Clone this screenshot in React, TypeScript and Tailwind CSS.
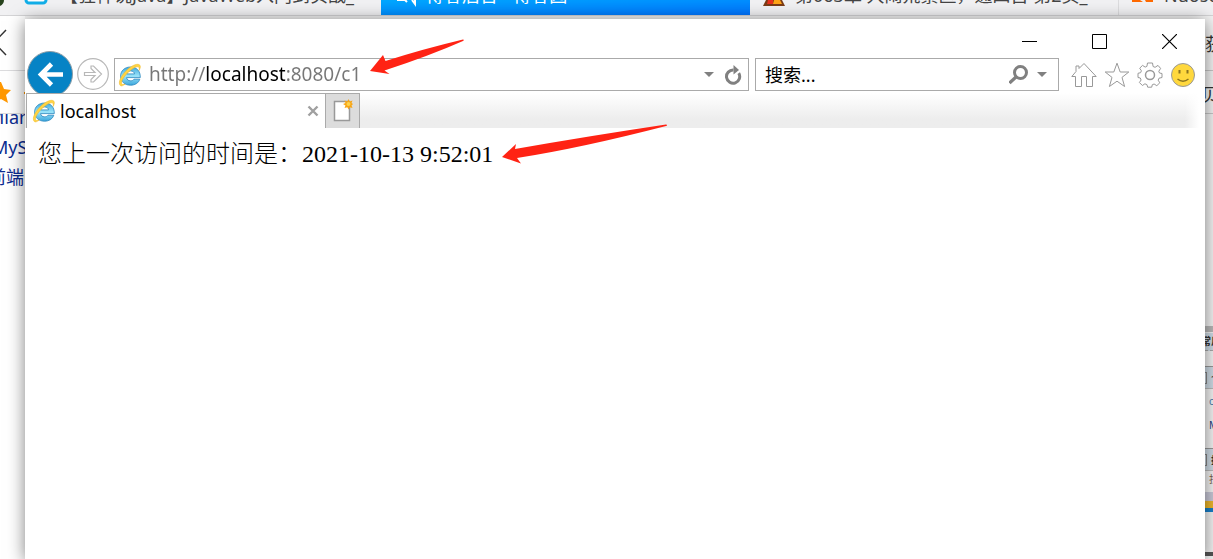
import type { ReactNode } from 'react';

const UI_FONT = "font-['Noto_Sans','Noto_Sans_CJK_SC',sans-serif]";

function IeLogo() {
  return (
    <svg viewBox="0 0 24 24" className="size-6 shrink-0" aria-hidden="true">
      <defs>
        <linearGradient id="ie-blue" x1="0" y1="0" x2="0" y2="1">
          <stop offset="0" stopColor="#3fa9dc" />
          <stop offset="0.5" stopColor="#9be4fa" />
          <stop offset="1" stopColor="#3ba6dc" />
        </linearGradient>
      </defs>
      <path
        d="M22.300 14.600H8.600c.2 2 1.700 3.200 3.900 3.200 1.600 0 2.800-.5 3.500-1.600h5.800c-1.200 3.800-4.700 6-9.300 6C6.700 22.200 2.600 18.600 2.600 13.100S6.800 4 12.600 4s9.900 3.800 9.700 10.600zM16.500 10.900c-.2-1.800-1.700-3-3.800-3s-3.700 1.200-4 3z"
        fill="url(#ie-blue)"
        stroke="#2b86be"
        strokeWidth="0.8"
      />
      <path
        d="M2.400 22.600C-.6 20 3.200 12 9.700 6.300 15 1.600 20.400.1 21.900 2.200c.9 1.300.3 3.300-.8 5.300.3-1.800.3-2.900-.5-3.400C18.900 3 14.600 5.100 10.300 9.200 5 14.300 2.300 19.600 4 21.200c.6.6 1.700.5 3.200-.1-2 1.500-3.800 2.300-4.800 1.500z"
        fill="#ffd445"
        stroke="#efb51f"
        strokeWidth="0.5"
      />
    </svg>
  );
}

function Caret() {
  return (
    <svg viewBox="0 0 10 5" className="h-[5px] w-[10px] shrink-0" aria-hidden="true">
      <path d="M0 0h10L5 5z" fill="#808080" />
    </svg>
  );
}

function IconButton({ label, children }: { label: string; children: ReactNode }) {
  return (
    <button type="button" aria-label={label} className="block shrink-0">
      {children}
    </button>
  );
}

// 后面浏览器的标签栏，只露出底部
function BackTabs() {
  return (
    <div className="flex h-4 overflow-hidden border-b border-[#d4d4d6] bg-[#f1f1f3] text-[18px] leading-6 whitespace-nowrap text-[#444]">
      <div className="flex w-[381px] shrink-0">
        <svg viewBox="0 0 60 16" className="h-4 w-[60px] shrink-0" aria-hidden="true">
          <path d="M0 0h4Q4 4 0 6z" fill="#27421c" />
          <rect x="26" y="-12" width="20" height="15" rx="3" fill="#fff" stroke="#12aee8" strokeWidth="3" />
        </svg>
        <span className="-mt-[17px]">【狂神说Java】JavaWeb入门到实战_</span>
      </div>
      <div className="flex w-[369px] shrink-0 bg-linear-to-br from-[#00a8ff] to-[#0073ff] text-white">
        <svg viewBox="0 0 45 16" className="h-4 w-[45px] shrink-0" aria-hidden="true">
          <path d="M16 0h8l2 2M31 0l3 4V0" fill="none" stroke="#fff" strokeWidth="2" />
        </svg>
        <span className="-mt-[17px]">博客后台 - 博客园</span>
      </div>
      <div className="flex w-[369px] shrink-0 border-r border-[#dcdcde]">
        <svg viewBox="0 0 45 16" className="h-4 w-[45px] shrink-0" aria-hidden="true">
          <path d="M16 0h16l3 6H13z" fill="#7a3b16" />
          <path d="M18 0h5v4h-6z" fill="#e8301c" />
          <path d="M24 0h6l2 4h-9z" fill="#ffa416" />
        </svg>
        <span className="-mt-[17px]">第063章 大闹荒景区，通四古 第2页_</span>
      </div>
      <div className="flex">
        <svg viewBox="0 0 45 16" className="h-4 w-[45px] shrink-0" aria-hidden="true">
          <path d="M13 0h8l3 2H13zM26 0h8v2h-7z" fill="#ff6a00" />
        </svg>
        <span className="-mt-[17px]">Nuoso</span>
      </div>
    </div>
  );
}

function BackLeft() {
  return (
    <div className="w-[25px] overflow-hidden bg-white text-[18px] leading-[30px] whitespace-nowrap text-[#0b2c91]">
      <svg viewBox="0 0 25 98" className="h-[98px] w-[25px]" aria-hidden="true">
        <path d="M6 14L-6 26.500 6 39" fill="none" stroke="#333" strokeWidth="1.500" />
        <path d="M0 54.500h25M0 97.500h25" stroke="#dcdcde" />
        <path d="M1 66l3 7 7 1-5 5 2 8-7-4-7 4V66z" fill="#ff9800" />
        <path d="M24 76h1v2h-1z" fill="#ff9800" />
      </svg>
      <div className="h-[18px] overflow-hidden">
        <a href="#maven" className="-mt-3 -ml-3 block">Mlan</a>
      </div>
      <a href="#mysql" className="-ml-2 block">MyS</a>
      <a href="#front" className="-ml-3 block">前端</a>
    </div>
  );
}

function BackRight() {
  return (
    <div className="w-2 overflow-hidden bg-[#f4f4f4] text-[18px] leading-6 whitespace-nowrap text-[#333]">
      <div className="h-[55px] overflow-hidden border-b border-[#c8c8c8] pt-4">获</div>
      <div className="h-[43px] overflow-hidden border-b border-[#c8c8c8] pt-3">
        <span className="-ml-1">贝</span>
      </div>
      <div className="mt-[212px] mb-px h-[6px] bg-[#b9b9b9]" />
      <div className="text-[10px]">
        <div className="h-[18px] border-b border-dashed border-[#aaa] bg-[#cfdce6] leading-4 font-bold">
          <span className="-ml-1">常用</span>
        </div>
        <div className="mt-[15px] flex h-[23px] items-center gap-1 border-t border-b border-[#999] border-b-[#bbb] bg-[#cfdce6]">
          <i className="h-3 w-[2px] shrink-0 border-y border-r border-[#888]" />
          <span>个</span>
        </div>
        <div className="pl-1 text-[#4a7fae]">c</div>
        <div className="pl-1 text-[#223a7a]">M</div>
        <div className="mt-[11px] flex h-[23px] items-center gap-1 border-t border-b border-[#999] border-b-[#bbb] bg-[#cfdce6]">
          <i className="h-3 w-[2px] shrink-0 border-y border-r border-[#888]" />
          <span className="font-bold">技</span>
        </div>
        <div className="h-[21px] pl-1 leading-4 text-[#7b6048]">找</div>
      </div>
      <div className="h-[9px] bg-[#c9c9d8]" />
      <div className="h-[7px] bg-[#eeb72c]" />
      <div className="h-1 bg-[#1780cc]" />
      <div className="mt-10 h-1 bg-[#555]" />
    </div>
  );
}

function TitleBar() {
  return (
    <div className="flex h-8 items-end justify-end gap-[55px] pr-7 pb-[2px]">
      <IconButton label="最小化">
        <svg viewBox="0 0 15 15" className="size-[15px]"><path d="M0 7.500h15" stroke="#000" /></svg>
      </IconButton>
      <IconButton label="最大化">
        <svg viewBox="0 0 15 15" className="size-[15px]">
          <path d="M.5.5h14v14H.5z" fill="none" stroke="#000" />
        </svg>
      </IconButton>
      <IconButton label="关闭">
        <svg viewBox="0 0 15 15" className="size-[15px]">
          <path d="M0 0l15 15M15 0L0 15" stroke="#000" strokeWidth="1.200" />
        </svg>
      </IconButton>
    </div>
  );
}

function NavBar() {
  return (
    <div className="flex h-[42px] items-start overflow-hidden pr-[9px] pl-[2px]">
      <IconButton label="后退">
        <svg viewBox="0 0 46 46" className="size-[46px]">
          <circle cx="23" cy="23" r="22.500" fill="#0683c5" stroke="#8d9da6" />
          <path d="M36 23.500H14M24.500 13L14 23.500 24.500 34" fill="none" stroke="#fff" strokeWidth="4.600" />
        </svg>
      </IconButton>
      <div className="ml-1 flex h-[46px] items-center">
        <IconButton label="前进">
          <svg viewBox="0 0 32 32" className="size-8">
            <circle cx="16" cy="16" r="15.300" fill="#fff" stroke="#b8b8b8" strokeWidth="1.200" />
            <path
              d="M7.500 14.500H18l-4-4V8h2.500l8 8-8 8H14v-2.500l4-4H7.500z"
              fill="none"
              stroke="#b8b8b8"
              strokeWidth="1.200"
            />
          </svg>
        </IconButton>
      </div>
      <div className="mt-[7px] ml-[5px] flex h-[33px] min-w-0 flex-1 items-center border border-[#aaa] pr-[6px] pl-[3px]">
        <IeLogo />
        <input
          aria-label="地址"
          defaultValue="http://localhost:8080/c1"
          className="ml-[7px] h-7 min-w-0 flex-1 bg-[linear-gradient(to_right,#777_57px,#000_57px,#000_138px,#777_138px)] bg-clip-text text-[19px] text-transparent caret-black outline-none"
        />
        <Caret />
        <span className="ml-[10px]">
          <IconButton label="刷新">
            <svg viewBox="0 0 18 20" className="h-5 w-[18px]">
              <path d="M14.700 8.100A6.600 6.600 0 1 1 9.500 5" fill="none" stroke="#808080" strokeWidth="3" />
              <path d="M9.500 0l5.500 5-5.500 4.500z" fill="#808080" />
            </svg>
          </IconButton>
        </span>
      </div>
      <div className="mt-[7px] ml-[6px] flex h-[33px] w-[304px] shrink-0 items-center border border-[#aaa] pr-[11px] pl-[9px]">
        <input
          aria-label="搜索"
          placeholder="搜索..."
          className="h-7 min-w-0 flex-1 text-[18px] outline-none placeholder:text-black"
        />
        <IconButton label="执行搜索">
          <svg viewBox="0 0 20 20" className="size-5">
            <circle cx="11.500" cy="7.500" r="6" fill="none" stroke="#808080" strokeWidth="3" />
            <path d="M7 12L.5 18" stroke="#808080" strokeWidth="3.200" />
          </svg>
        </IconButton>
        <span className="ml-2">
          <Caret />
        </span>
      </div>
      <div className="mt-[11px] ml-3 flex shrink-0 gap-[7px]">
        <IconButton label="主页">
          <svg viewBox="0 0 26 26" className="size-[26px]" fill="none" stroke="#999">
            <path d="M13 1.500l-5 5V4H5v5.500l-4.200 5h3.700v10h6v-10h5v10h6v-10h3.700z" />
          </svg>
        </IconButton>
        <IconButton label="收藏夹">
          <svg viewBox="0 0 26 26" className="size-[26px]" fill="none" stroke="#999">
            <path d="M13 1.200l3.200 8.800h8.600l-6.800 5.400 2.600 9.100L13 19.200l-7.600 5.300L8 15.400 1.200 10h8.600z" />
          </svg>
        </IconButton>
        <IconButton label="工具">
          <svg viewBox="0 0 26 26" className="size-[26px]" fill="none" stroke="#999">
            <path d="M10.500 1h5l.6 3.500 2 .8L21 3.400l2.600 3-1.800 2.900.7 1.700 2.500.5v4l-3 .7-.8 2 1.600 2.600-3 2.900-2.700-1.700-1.800.7-.6 2.500h-4l-.8-2.600-2-.8-2.500 1.700-3-3 1.700-2.500-.8-2L1 15.500v-4.200l2.600-.6.8-1.900-1.700-2.600 2.800-2.800 2.700 1.700 1.700-.7z" />
            <circle cx="13" cy="13" r="4.500" strokeWidth="1.500" />
          </svg>
        </IconButton>
        <IconButton label="反馈">
          <svg viewBox="0 0 26 26" className="size-[26px]">
            <circle cx="13" cy="13" r="11.500" fill="#ffd83d" stroke="#999" />
            <path d="M9.500 8v3.500M17.500 8v3.500" stroke="#8c7420" strokeWidth="2" />
            <path d="M7.500 17q5.500 4.500 11 0" fill="none" stroke="#8c7420" strokeWidth="1.500" />
          </svg>
        </IconButton>
      </div>
    </div>
  );
}

function TabBar() {
  return (
    <div className="relative flex h-[35px] bg-linear-to-b from-white to-[#ededed] to-75% pl-px">
      <div className="flex w-[299px] items-center border-t border-l border-[#aaa] bg-white pr-[6px] pl-[5px]">
        <IeLogo />
        <span className="ml-1 flex-1 text-[18px] leading-6">localhost</span>
        <IconButton label="关闭标签页">
          <svg viewBox="0 0 12 12" className="size-3">
            <path d="M1.500 1.500l9 9M10.500 1.500l-9 9" stroke="#a0a0a0" strokeWidth="2.400" />
          </svg>
        </IconButton>
      </div>
      <button
        type="button"
        aria-label="新建标签页"
        className="flex w-[35px] items-center justify-center border border-b-0 border-[#aaa] bg-[#dcdcdc]"
      >
        <svg viewBox="0 0 20 24" className="h-6 w-5">
          <path d="M1.500 2.500h15v19h-15z" fill="#fff" stroke="#999" strokeWidth="1.500" />
          <path
            d="M15.500 0l1.200 2.500 2.800-1-1 2.500 1.500 1-1.500 1.500 1 2.500-2.800-.8-1.200 2.300-1.200-2.300-2.800.8 1-2.500L10 5l2.500-1-1-2.500 2.800 1z"
            fill="#f7a516"
          />
          <circle cx="15.500" cy="5" r="2" fill="#ffd34a" />
        </svg>
      </button>
      <div className="absolute inset-y-0 right-0 w-5 bg-linear-to-r from-transparent to-white to-70%" />
    </div>
  );
}

export default function App() {
  return (
    <div className={`relative min-h-screen overflow-hidden bg-[#f4f4f4] ${UI_FONT}`}>
      <div className="absolute inset-0 flex flex-col">
        <BackTabs />
        <div className="flex flex-1 justify-between overflow-hidden">
          <BackLeft />
          <BackRight />
        </div>
      </div>

      <main className="relative mt-[19px] mr-2 ml-[25px] min-h-[calc(100vh-19px)] bg-white shadow-[0_2px_16px_rgba(0,0,0,0.5)]">
        <TitleBar />
        <NavBar />
        <TabBar />
        <p className="px-[13px] pt-[10px] font-['Liberation_Serif','Noto_Sans_CJK_SC',serif] text-2xl font-light text-black">
          您上一次访问的时间是：2021-10-13 9:52:01
        </p>
      </main>

      {/* 标注箭头 */}
      <svg
        viewBox="0 0 300 126"
        className="pointer-events-none absolute top-[38px] left-[369px] h-[126px] w-[300px]"
        fill="#ff2314"
        aria-hidden="true"
      >
        <path d="M1 33L14 17l2.500 6Q54 11 94 1.500q2 0 0 1.500Q60 18 15.500 32.500l5 3.500z" />
        <path d="M133 119l14-13-1 5Q220 98 297 86.500q2 .5 0 1.500Q212 110 148 120l4 5.500z" />
      </svg>
    </div>
  );
}
